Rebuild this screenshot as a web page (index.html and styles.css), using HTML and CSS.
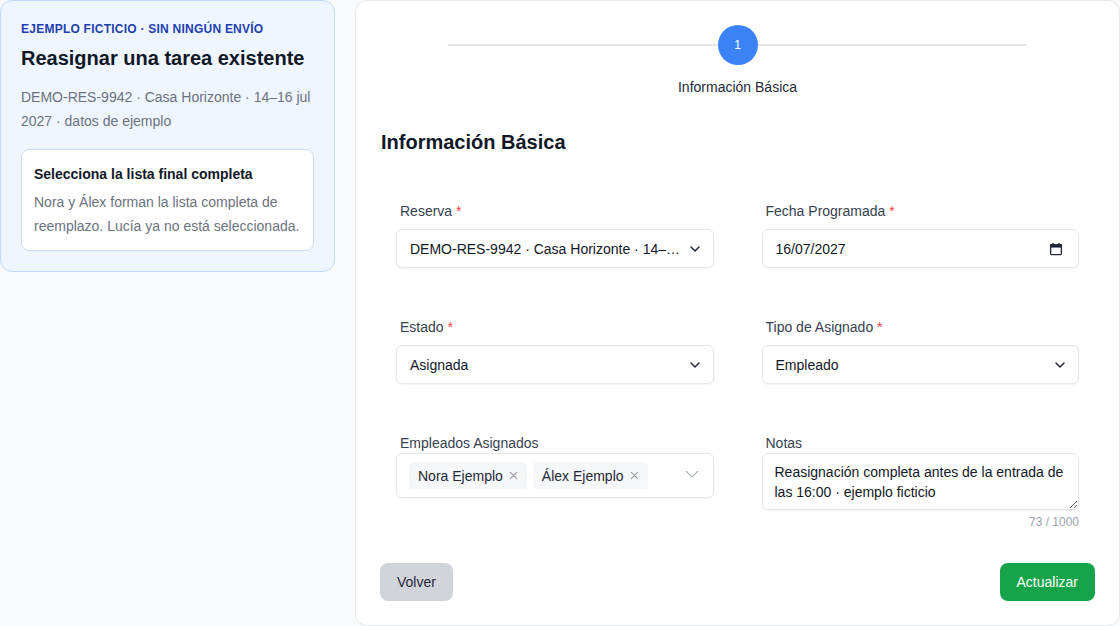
FILE: index.html
```html
<!DOCTYPE html>
<html lang="es">
<head>
<meta charset="utf-8">
<title>Reasignar tarea</title>
<link rel="stylesheet" href="styles.css">
</head>
<body>
<div class="page">
  <aside class="side">
    <div class="info-card">
      <div class="eyebrow">Ejemplo ficticio · sin ningún envío</div>
      <h2 class="side-title">Reasignar una tarea existente</h2>
      <p class="side-text">DEMO-RES-9942 · Casa Horizonte · 14–16 jul 2027 · datos de ejemplo</p>
      <div class="hint">
        <div class="hint-title">Selecciona la lista final completa</div>
        <p class="hint-text">Nora y Álex forman la lista completa de reemplazo. Lucía ya no está seleccionada.</p>
      </div>
    </div>
  </aside>

  <main class="panel">
    <div class="stepper">
      <div class="step-track">
        <div class="step-seg"></div>
        <div class="step-dot">1</div>
        <div class="step-seg"></div>
      </div>
      <div class="step-label">Información Básica</div>
    </div>

    <h1 class="section-title">Información Básica</h1>

    <div class="form-grid">
      <div class="field">
        <div class="label">Reserva <span class="req">*</span></div>
        <div class="control select">
          <span class="value ellipsis">DEMO-RES-9942 · Casa Horizonte · 14–16 jul 2027</span>
          <svg class="chev" viewBox="0 0 24 24" width="16" height="16"><path d="M6 9l6 6 6-6" fill="none" stroke="#1f2937" stroke-width="2.2" stroke-linecap="round" stroke-linejoin="round"/></svg>
        </div>
      </div>
      <div class="field">
        <div class="label">Fecha Programada <span class="req">*</span></div>
        <div class="control date">
          <span class="value">16/07/2027</span>
          <svg class="cal" viewBox="0 0 14 14" width="14" height="14"><rect x="1.6" y="2.6" width="10.8" height="10" rx="0.8" fill="none" stroke="#1f2937" stroke-width="1.3"/><rect x="1.6" y="2.6" width="10.8" height="3" fill="#1f2937"/><path d="M4 1v2.4M10 1v2.4" stroke="#1f2937" stroke-width="1.3"/></svg>
        </div>
      </div>

      <div class="field">
        <div class="label">Estado <span class="req">*</span></div>
        <div class="control select">
          <span class="value">Asignada</span>
          <svg class="chev" viewBox="0 0 24 24" width="16" height="16"><path d="M6 9l6 6 6-6" fill="none" stroke="#1f2937" stroke-width="2.2" stroke-linecap="round" stroke-linejoin="round"/></svg>
        </div>
      </div>
      <div class="field">
        <div class="label">Tipo de Asignado <span class="req">*</span></div>
        <div class="control select">
          <span class="value">Empleado</span>
          <svg class="chev" viewBox="0 0 24 24" width="16" height="16"><path d="M6 9l6 6 6-6" fill="none" stroke="#1f2937" stroke-width="2.2" stroke-linecap="round" stroke-linejoin="round"/></svg>
        </div>
      </div>

      <div class="field">
        <div class="label tight">Empleados Asignados</div>
        <div class="control multi">
          <div class="chips">
            <span class="chip">Nora Ejemplo<svg class="x" viewBox="0 0 10 10" width="9" height="9"><path d="M1.5 1.5l7 7M8.5 1.5l-7 7" stroke="#9ca3af" stroke-width="1.4" stroke-linecap="round"/></svg></span>
            <span class="chip">Álex Ejemplo<svg class="x" viewBox="0 0 10 10" width="9" height="9"><path d="M1.5 1.5l7 7M8.5 1.5l-7 7" stroke="#9ca3af" stroke-width="1.4" stroke-linecap="round"/></svg></span>
          </div>
          <svg class="chev light" viewBox="0 0 24 24" width="18" height="18"><path d="M4.5 8.5l7.5 7.5 7.5-7.5" fill="none" stroke="#9ca3af" stroke-width="1.4" stroke-linecap="round" stroke-linejoin="round"/></svg>
        </div>
      </div>
      <div class="field">
        <div class="label tight">Notas</div>
        <textarea class="notes" rows="2">Reasignación completa antes de la entrada de las 16:00 · ejemplo ficticio</textarea>
        <div class="counter">73 / 1000</div>
      </div>
    </div>

    <div class="actions">
      <button class="btn btn-back" type="button">Volver</button>
      <button class="btn btn-primary" type="button">Actualizar</button>
    </div>
  </main>
</div>
</body>
</html>
```

FILE: styles.css
```css
* { box-sizing: border-box; }

body {
  margin: 0;
  background: #f8fafc;
  font-family: "Liberation Sans", Arial, sans-serif;
  color: #111827;
}

.page {
  display: grid;
  grid-template-columns: 335px 1fr;
  column-gap: 20px;
  align-items: start;
}

/* Left info card */
.info-card {
  background: #eff6ff;
  border: 1px solid #bfdbfe;
  border-radius: 12px;
  padding: 20px;
}

.eyebrow {
  font-size: 12px;
  line-height: 16px;
  font-weight: 700;
  text-transform: uppercase;
  letter-spacing: 0.02em;
  color: #1e40af;
}

.side-title {
  margin: 7px 0 0;
  font-size: 20px;
  line-height: 28px;
  font-weight: 700;
  color: #111827;
}

.side-text {
  margin: 13px 0 0;
  font-size: 14px;
  line-height: 24px;
  color: #6b7280;
}

.hint {
  margin-top: 16px;
  background: #ffffff;
  border: 1px solid #c9dcf3;
  border-radius: 8px;
  padding: 12px;
}

.hint-title {
  font-size: 14px;
  line-height: 24px;
  font-weight: 700;
  color: #111827;
}

.hint-text {
  margin: 4px 0 0;
  font-size: 14px;
  line-height: 24px;
  color: #6b7280;
}

/* Main panel */
.panel {
  background: #ffffff;
  border: 1px solid #e5e7eb;
  border-radius: 12px;
  padding: 24px;
}

.stepper {
  display: flex;
  flex-direction: column;
  align-items: center;
}

.step-track {
  display: flex;
  align-items: center;
  width: 100%;
  padding: 0 68px;
}

.step-seg {
  flex: 1;
  height: 2px;
  background: #e5e7eb;
}

.step-dot {
  width: 40px;
  height: 40px;
  border-radius: 50%;
  background: #3b82f6;
  color: #ffffff;
  font-size: 12px;
  display: flex;
  align-items: center;
  justify-content: center;
}

.step-label {
  margin-top: 12px;
  font-size: 14px;
  line-height: 20px;
  color: #1f2937;
}

.section-title {
  margin: 31px 0 0 1px;
  font-size: 20px;
  line-height: 28px;
  font-weight: 700;
  color: #111827;
}

.form-grid {
  margin-top: 45px;
  padding: 0 16px;
  display: grid;
  grid-template-columns: 1fr 1fr;
  column-gap: 48px;
  row-gap: 49px;
}

.field {
  display: flex;
  flex-direction: column;
  min-width: 0;
}

.label {
  font-size: 14px;
  line-height: 20px;
  color: #374151;
  padding-left: 4px;
  margin-bottom: 8px;
}

.label.tight { margin-bottom: 0; }

.req { color: #ef4444; }

.control {
  display: flex;
  align-items: center;
  background: #ffffff;
  border: 1px solid #e5e7eb;
  border-radius: 6px;
  box-shadow: 0 1px 2px rgba(0, 0, 0, 0.05);
  font-size: 14px;
  line-height: 20px;
  color: #111827;
}

.select,
.date {
  height: 39px;
  padding: 0 10px 0 13px;
}

.value { flex: 1; min-width: 0; }

.ellipsis {
  white-space: nowrap;
  overflow: hidden;
  text-overflow: ellipsis;
  padding-right: 6px;
}

.chev { flex: none; }

.date { padding-right: 15px; }
.cal { flex: none; }

.multi {
  padding: 8px 12px 8px 12px;
  height: 45px;
}

.chips {
  flex: 1;
  display: flex;
  gap: 6px;
}

.chip {
  display: inline-flex;
  align-items: center;
  gap: 6px;
  height: 27px;
  padding: 0 9px;
  background: #f6f7f9;
  border-radius: 4px;
  font-size: 14px;
  color: #1f2937;
}

.chev.light { margin-top: -4px; }

.notes {
  display: block;
  width: 100%;
  height: 57px;
  padding: 8px 12px;
  border: 1px solid #e5e7eb;
  border-radius: 6px;
  box-shadow: 0 1px 2px rgba(0, 0, 0, 0.05);
  font-family: "Liberation Sans", Arial, sans-serif;
  font-size: 14px;
  line-height: 20px;
  color: #111827;
  resize: vertical;
}

.counter {
  margin-top: 4px;
  text-align: right;
  font-size: 12px;
  line-height: 16px;
  color: #9ca3af;
}

.actions {
  margin-top: 33px;
  display: flex;
  justify-content: space-between;
}

.btn {
  border: none;
  border-radius: 8px;
  padding: 9px 17px;
  font-family: "Liberation Sans", Arial, sans-serif;
  font-size: 14px;
  line-height: 20px;
}

.btn-back {
  background: #d1d5db;
  color: #1f2937;
}

.btn-primary {
  background: #16a34a;
  color: #ffffff;
}
```
